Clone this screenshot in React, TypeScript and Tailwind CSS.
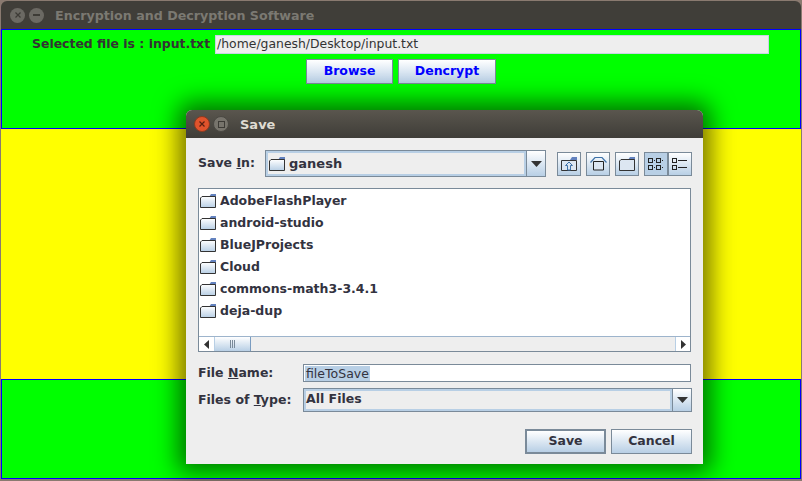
import React from 'react'

const folders = ['AdobeFlashPlayer', 'android-studio', 'BlueJProjects', 'Cloud', 'commons-math3-3.4.1', 'deja-dup']

const btnGrad = 'bg-gradient-to-b from-[#ffffff] to-[#b8cfe5]'

const FolderIcon = () => (
  <svg width="16" height="14" viewBox="0 0 16 14" className="shrink-0">
    <defs>
      <linearGradient id="folderFill" x1="0" y1="0" x2="0" y2="1">
        <stop offset="0" stopColor="#ffffff" />
        <stop offset="1" stopColor="#b8cfe5" />
      </linearGradient>
    </defs>
    <path d="M9 3 L11 0 H16 V3 Z" fill="#6382bf" />
    <path d="M0.5 4 L2 2.5 H15.5 V13.5 H0.5 Z" fill="url(#folderFill)" stroke="#333" strokeWidth="1" />
  </svg>
)

const Arrow = () => (
  <svg width="11" height="6" viewBox="0 0 11 6">
    <path d="M0 0 H11 L5.5 6 Z" fill="#333" />
  </svg>
)

const ToolButton = ({ active, children }: { active?: boolean; children: React.ReactNode }) => (
  <div className={`w-[24px] h-[24px] border border-[#7a8a99] flex items-center justify-center ${active ? 'bg-[#b8cfe5]' : btnGrad}`}>
    {children}
  </div>
)

const SaveDialog = () => (
  <div className="absolute left-[186px] top-[110px] w-[517px] h-[354px] flex flex-col bg-[#eeeeee] rounded-t-[6px] shadow-[0_0_24px_8px_rgba(0,0,0,0.55)]">
    <div className="h-[28px] shrink-0 rounded-t-[6px] bg-gradient-to-b from-[#5a564e] to-[#3f3d38] flex items-center pl-[8px]">
      <div className="w-[16px] h-[16px] rounded-full bg-[#e0532c] border border-[#8c3a20] flex items-center justify-center">
        <svg width="6" height="6" viewBox="0 0 6 6"><path d="M0.5 0.5 L5.5 5.5 M5.5 0.5 L0.5 5.5" stroke="#5a2010" strokeWidth="1.2" /></svg>
      </div>
      <div className="ml-[3px] w-[16px] h-[16px] rounded-full bg-[#77746c] border border-[#4a4842] flex items-center justify-center">
        <div className="w-[7px] h-[7px] border border-[#3d3b36]" />
      </div>
      <span className="ml-[11px] pt-[2px] text-[13px] font-bold text-[#dfdbd2]">Save</span>
    </div>

    <div className="flex-1 flex flex-col pl-[12px] pr-[11px] pt-[12px]">
      <div className="flex items-center h-[27px]">
        <span className="w-[67px] text-[#33333f] text-[12.5px] font-bold">
          Save <span className="underline">I</span>n:
        </span>
        <div className="w-[281px] h-[27px] border border-[#7a8a99] flex bg-[#eeeeee]">
          <div className="flex-1 border-2 border-[#b8cfe5] flex items-center gap-[4px] pl-[1px]">
            <FolderIcon />
            <span className="text-[#33333f] text-[13px] font-bold">ganesh</span>
          </div>
          <div className={`w-[19px] border-l border-[#7a8a99] flex items-center justify-center ${btnGrad}`}>
            <Arrow />
          </div>
        </div>
        <div className="ml-[11px] flex gap-[5px]">
          <ToolButton>
            <svg width="16" height="14" viewBox="0 0 16 14">
              <path d="M9 3 L11 0 H16 V3 Z" fill="#6382bf" />
              <path d="M0.5 3.5 H15.5 V13.5 H0.5 Z" fill="#dce6f1" stroke="#333" />
              <path d="M8 5 L4.5 8.5 H6.5 V13 H9.5 V8.5 H11.5 Z" fill="none" stroke="#3f72a8" />
            </svg>
          </ToolButton>
          <ToolButton>
            <svg width="17" height="15" viewBox="0 0 17 15">
              <path d="M0.5 6.5 L5 1.5 H12 L16.5 6.5" fill="none" stroke="#3f72a8" strokeWidth="1.2" />
              <path d="M3.5 5.5 H13.5 V14 H3.5 Z" fill="#dce6f1" stroke="#222" />
            </svg>
          </ToolButton>
          <ToolButton>
            <svg width="16" height="14" viewBox="0 0 16 14">
              <path d="M9 3 L11 0 H16 V3 Z" fill="#6382bf" />
              <path d="M0.5 4 L2 2.5 H15.5 V13.5 H0.5 Z" fill="#dce6f1" stroke="#333" />
            </svg>
          </ToolButton>
          <div className="flex">
            <ToolButton active>
              <svg width="16" height="14" viewBox="0 0 16 14" fill="none" stroke="#222">
                <rect x="0.5" y="1.5" width="4" height="4" /><rect x="8.5" y="1.5" width="4" height="4" />
                <rect x="0.5" y="8.5" width="4" height="4" /><rect x="8.5" y="8.5" width="4" height="4" />
                <path d="M6 3.5 H7 M14 3.5 H15 M6 10.5 H7 M14 10.5 H15" />
              </svg>
            </ToolButton>
            <ToolButton>
              <svg width="16" height="14" viewBox="0 0 16 14" fill="none" stroke="#222">
                <rect x="0.5" y="1.5" width="4" height="4" /><rect x="0.5" y="8.5" width="4" height="4" />
                <path d="M6 3.5 H15 M6 10.5 H15" />
              </svg>
            </ToolButton>
          </div>
        </div>
      </div>

      <div className="mt-[11px] w-[493px] h-[164px] border border-[#7a8a99] bg-white flex flex-col">
        <div className="flex-1 flex flex-col pt-[1px] pl-[1px]">
          {folders.map((name) => (
            <div key={name} className="h-[22px] flex items-center gap-[4px]">
              <FolderIcon />
              <span className="text-[#33333f] text-[12.5px] font-bold">{name}</span>
            </div>
          ))}
        </div>
        <div className="h-[15px] border-t border-[#9db4cc] bg-[#eeeeee] flex">
          <div className="w-[16px] bg-white border-r border-[#b8cfe5] flex items-center justify-center">
            <svg width="5" height="9" viewBox="0 0 5 9"><path d="M5 0 V9 L0 4.5 Z" fill="#333" /></svg>
          </div>
          <div className={`w-[36px] border-r border-[#7a9cc0] flex items-center justify-center ${btnGrad}`}>
            <div className="w-[5px] h-[8px] border-x border-[#7a8a99] flex justify-center">
              <div className="w-px h-full bg-[#7a8a99]" />
            </div>
          </div>
          <div className="flex-1" />
          <div className="w-[15px] bg-white border-l border-[#b8cfe5] flex items-center justify-center">
            <svg width="5" height="9" viewBox="0 0 5 9"><path d="M0 0 V9 L5 4.5 Z" fill="#333" /></svg>
          </div>
        </div>
      </div>

      <div className="mt-[12px] flex items-center h-[18px]">
        <span className="w-[105px] text-[#33333f] text-[12.5px] font-bold">
          File <span className="underline">N</span>ame:
        </span>
        <div className="w-[388px] h-[18px] border border-[#7a8a99] bg-white flex items-center pl-[1px]">
          <span className="bg-[#b8cfe5] text-[#33333f] text-[12.5px] leading-[15px] px-[1px]">fileToSave</span>
        </div>
      </div>

      <div className="mt-[6px] flex items-center h-[24px]">
        <span className="w-[105px] text-[#33333f] text-[12.5px] font-bold">
          Files of <span className="underline">T</span>ype:
        </span>
        <div className="w-[389px] h-[24px] border border-[#7a8a99] flex bg-[#eeeeee]">
          <div className="flex-1 border-2 border-[#b8cfe5] flex items-center pb-[1px]">
            <span className="text-[#33333f] text-[12.5px] font-bold">All Files</span>
          </div>
          <div className={`w-[19px] border-l border-[#7a8a99] flex items-center justify-center ${btnGrad}`}>
            <Arrow />
          </div>
        </div>
      </div>

      <div className="mt-[17px] flex justify-end gap-[5px] w-[494px]">
        <div className={`w-[81px] h-[25px] border-2 border-[#7a8a99] flex items-center justify-center text-[#33333f] text-[12.5px] font-bold ${btnGrad}`}>Save</div>
        <div className={`w-[81px] h-[25px] border border-[#7a8a99] flex items-center justify-center text-[#33333f] text-[12.5px] font-bold ${btnGrad}`}>Cancel</div>
      </div>
    </div>
  </div>
)

export default function App() {
  return (
    <div className="relative w-[802px] h-[481px] overflow-hidden bg-[#8a7a70] font-['DejaVu_Sans',sans-serif]">
      <div className="mx-[1px] mt-[1px] h-[478px] flex flex-col">
        <div className="h-[28px] shrink-0 rounded-t-[6px] bg-[#403e39] flex items-center pl-[9px]">
          <div className="w-[15px] h-[15px] rounded-full bg-[#6b6963] flex items-center justify-center">
            <svg width="6" height="6" viewBox="0 0 6 6"><path d="M0.5 0.5 L5.5 5.5 M5.5 0.5 L0.5 5.5" stroke="#3d3b36" strokeWidth="1.2" /></svg>
          </div>
          <div className="ml-[4px] w-[15px] h-[15px] rounded-full bg-[#6b6963] flex items-center justify-center">
            <div className="w-[7px] h-[2px] bg-[#3d3b36]" />
          </div>
          <span className="ml-[11px] pt-[2px] text-[12.66px] font-bold text-[#7b7972]">Encryption and Decryption Software</span>
        </div>

        <div className="h-[100px] shrink-0 bg-[#00ff00] border border-[#0000ff] flex flex-col items-center pt-[5px]">
          <div className="flex items-center h-[19px] w-full pl-[30px]">
            <span className="text-[12.45px] font-bold text-[#333333]">Selected file is : input.txt</span>
            <div className="ml-[5px] w-[554px] h-[19px] bg-[#eeeeee] border border-[#c8d4e4] flex items-center pl-[1px] text-[12.4px] text-[#333333]">
              /home/ganesh/Desktop/input.txt
            </div>
          </div>
          <div className="mt-[5px] flex gap-[5px]">
            <div className={`w-[87px] h-[25px] border border-[#7a8a99] flex items-center justify-center text-[12.5px] font-bold text-[#0000ff] ${btnGrad}`}>Browse</div>
            <div className={`w-[98px] h-[25px] border border-[#7a8a99] flex items-center justify-center text-[12.5px] font-bold text-[#0000ff] ${btnGrad}`}>Dencrypt</div>
          </div>
        </div>

        <div className="h-[250px] shrink-0 bg-[#ffff00]" />
        <div className="flex-1 bg-[#00ff00] border border-[#0000ff]" />
      </div>
      <SaveDialog />
    </div>
  )
}
